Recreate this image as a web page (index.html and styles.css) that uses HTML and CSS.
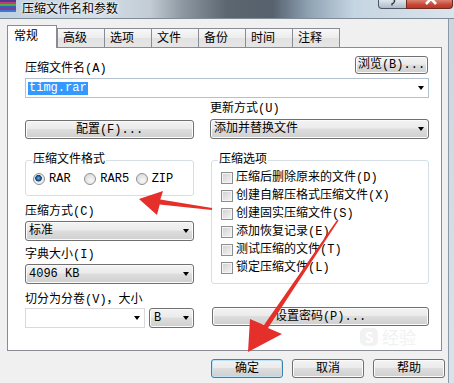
FILE: index.html
```html
<!DOCTYPE html>
<html lang="zh-CN">
<head>
  <meta charset="UTF-8" />
  <title>压缩文件名和参数</title>
  <link rel="stylesheet" href="styles.css">
</head>
<body>
  <div class="titlebar">
    <svg class="app-icon" width="17" height="12" viewBox="0 0 17 12">
      <rect x="0" y="0" width="16" height="2" fill="#4a3b8f"/>
      <rect x="0" y="2" width="16" height="2" fill="#c43a7c"/>
      <rect x="0" y="4" width="16" height="2" fill="#5aa83a"/>
      <rect x="0" y="6" width="16" height="2" fill="#2d62c0"/>
      <rect x="0" y="8" width="16" height="2" fill="#7b3f98"/>
      <rect x="0" y="10" width="16" height="2" fill="#3a7bd0"/>
    </svg>
    <span class="title">压缩文件名和参数</span>
    <div class="caption-btns">
      <span class="cap help">
        <svg width="28" height="9" viewBox="0 0 28 9"><path d="M11 -1 q5 -0.5 4.5 2.5 q-0.5 1.5 -2.5 2.5 v1.5" fill="none" stroke="#2f3b48" stroke-width="1.4"/></svg>
      </span>
      <span class="cap close">
        <svg width="46" height="9" viewBox="0 0 46 9"><path d="M16 -10 L29 4 M32 -10 L19 4" stroke="#fff" stroke-width="2.6"/></svg>
      </span>
    </div>
  </div>

  <div class="client">
    <div class="tabs">
      <div class="tab active">常规</div>
      <div class="tab">高级</div>
      <div class="tab">选项</div>
      <div class="tab">文件</div>
      <div class="tab">备份</div>
      <div class="tab">时间</div>
      <div class="tab">注释</div>
    </div>

    <div class="panel">
      <div class="name-row">
        <span class="label">压缩文件名(A)</span>
        <button class="btn browse">浏览(B)...</button>
      </div>
      <div class="combo edit"><span class="sel">timg.rar</span><i class="arrow"></i></div>

      <div class="cols">
        <div class="col">
          <button class="btn config">配置(F)...</button>
          <fieldset class="group format">
            <legend>压缩文件格式</legend>
            <div class="radios">
              <span class="radio-item"><i class="radio on"></i>RAR</span>
              <span class="radio-item"><i class="radio"></i>RAR5</span>
              <span class="radio-item"><i class="radio"></i>ZIP</span>
            </div>
          </fieldset>
          <div class="label method">压缩方式(C)</div>
          <div class="combo list"><span>标准</span><i class="arrow"></i></div>
          <div class="label dict">字典大小(I)</div>
          <div class="combo list"><span>4096 KB</span><i class="arrow"></i></div>
          <div class="label split">切分为分卷(V)，大小</div>
          <div class="split-row">
            <div class="combo edit light"><i class="arrow"></i></div>
            <div class="combo list unit"><span>B</span><i class="arrow"></i></div>
          </div>
        </div>

        <div class="col">
          <div class="label update">更新方式(U)</div>
          <div class="combo list update-combo"><span>添加并替换文件</span><i class="arrow"></i></div>
          <fieldset class="group options">
            <legend>压缩选项</legend>
            <div class="checks">
              <div class="check-row"><i class="check"></i>压缩后删除原来的文件(D)</div>
              <div class="check-row"><i class="check"></i>创建自解压格式压缩文件(X)</div>
              <div class="check-row"><i class="check"></i>创建固实压缩文件(S)</div>
              <div class="check-row"><i class="check"></i>添加恢复记录(E)</div>
              <div class="check-row"><i class="check"></i>测试压缩的文件(T)</div>
              <div class="check-row"><i class="check"></i>锁定压缩文件(L)</div>
            </div>
          </fieldset>
          <button class="btn password">设置密码(P)...</button>
        </div>
      </div>

      <div class="watermark"><span class="wm-logo">S</span>经验</div>
    </div>

    <div class="footer">
      <button class="btn default">确定</button>
      <button class="btn">取消</button>
      <button class="btn">帮助</button>
    </div>
  </div>

  <svg class="arrows" width="454" height="383" viewBox="0 0 454 383">
    <polygon fill="#e42f2b" points="139,199 163,191 160.3,199.5 212.1,208 211.9,210 159.7,204.5 157,215"/>
    <polygon fill="#e42f2b" points="248,352 250,319 264,325 337.4,219.6 338.6,220.4 268,328 282,334"/>
  </svg>
</body>
</html>
```

FILE: styles.css
```css
* {
  box-sizing: border-box;
}
body {
  margin: 0;
  width: 454px;
  height: 383px;
  overflow: hidden;
  position: relative;
  background: linear-gradient(#c9d5e0, #dbe3ea);
  font-family: "Liberation Mono", "Noto Sans CJK SC", monospace;
  font-size: 12px;
  line-height: 14px;
  color: #000;
}

/* title bar */
.titlebar {
  height: 19px;
  display: flex;
  align-items: flex-start;
  border-bottom: 1px solid #7f8c98;
  background: linear-gradient(90deg, #bfd0df 0%, #d3dee8 22%, #c3ccd4 33%, #8e99a3 40%, #5c6670 50%, #56616d 60%, #8fa2b3 68%, #c6d5e2 78%, #dae4ec 100%);
}
.app-icon {
  flex: none;
}
.title {
  margin: 1px 0 0 5px;
  font-family: "Noto Sans CJK SC", sans-serif;
  font-size: 12px;
  line-height: 13px;
  text-shadow: 0 0 4px #fff, 0 0 2px #fff;
}
.caption-btns {
  margin-left: auto;
  margin-right: 1px;
  display: flex;
}
.cap {
  display: block;
  height: 9px;
  border: 1px solid #4b5765;
  border-top: 0;
  overflow: hidden;
}
.cap svg {
  display: block;
}
.cap.help {
  width: 29px;
  border-radius: 0 0 0 4px;
  background: linear-gradient(#dfe6ed, #aebbc8);
}
.cap.close {
  width: 47px;
  margin-left: -1px;
  border-color: #6d2b22;
  border-radius: 0 0 4px 0;
  background: linear-gradient(#dc8272, #c64533 60%, #b5392a);
}

/* client area */
.client {
  height: 364px;
  margin-right: 5px;
  padding-top: 6px;
  background: #f0f0f0;
  border-right: 1px solid #8b99a7;
}
.tabs {
  display: flex;
  align-items: flex-end;
  height: 22px;
  margin-left: 7px;
}
.tab {
  width: 48px;
  height: 19px;
  margin-left: -1px;
  padding: 3px 0 0 5px;
  border: 1px solid #898c95;
  border-bottom: 0;
  background: linear-gradient(#f8f8f8, #ececec 50%, #e2e2e2 51%, #e6e6e6);
}
.tab.active {
  width: 50px;
  height: 23px;
  margin-left: 0;
  margin-bottom: -1px;
  padding: 4px 0 0 6px;
  background: #fff;
  position: relative;
  z-index: 1;
}
.tab.active + .tab {
  margin-left: 0;
}

.panel {
  position: relative;
  width: 435px;
  height: 304px;
  margin-left: 7px;
  padding: 8px 12px 0 17px;
  background: #fff;
  border: 1px solid #898c95;
}

/* buttons and combos */
.btn {
  display: block;
  padding: 0;
  font: inherit;
  color: #000;
  border: 1px solid #707070;
  border-radius: 3px;
  background: linear-gradient(#f3f3f3, #ebebeb 45%, #dddddd 50%, #cfcfcf);
  box-shadow: inset 0 0 0 1px #fbfbfb;
}
.btn.default {
  border-color: #3c7fb1;
  box-shadow: inset 0 0 0 1px #bfe3f6;
}
.name-row {
  display: flex;
  justify-content: space-between;
  height: 20px;
}
.name-row .label {
  align-self: flex-end;
}
.browse {
  width: 73px;
  height: 18px;
  margin-right: 1px;
}
.combo {
  display: flex;
  align-items: center;
  height: 20px;
  padding-left: 3px;
}
.combo .arrow {
  margin-left: auto;
  margin-right: 4px;
  width: 0;
  height: 0;
  border-left: 3.5px solid transparent;
  border-right: 3.5px solid transparent;
  border-top: 4px solid #000;
}
.combo.edit {
  margin-top: 2px;
  padding-left: 2px;
  background: #fff;
  border: 1px solid #b4c2d0;
}
.combo.edit.light {
  margin-top: 0;
  border-color: #d9d9d9;
  width: 120px;
}
.combo.list {
  border: 1px solid #707070;
  border-radius: 3px;
  background: linear-gradient(#f3f3f3, #ebebeb 45%, #dddddd 50%, #cfcfcf);
  box-shadow: inset 0 0 0 1px #fbfbfb;
}
.sel {
  background: #3399ff;
  color: #fff;
  padding: 0 1px;
  line-height: 13px;
}

.cols {
  display: grid;
  grid-template-columns: 169px 219px;
  column-gap: 16px;
  align-items: start;
}
.col {
  display: flex;
  flex-direction: column;
}
.config {
  margin-top: 22px;
  height: 19px;
}

/* group boxes */
.group {
  margin: 14px 0 0;
  min-width: 0;
  padding: 0 6px 9px;
  border: 1px solid #d5dfe5;
  border-radius: 3px;
}
.group legend {
  padding: 0 1px;
  line-height: 14px;
}
.radios {
  display: flex;
  height: 14px;
  margin: 5px 0 0 1px;
}
.radio-item {
  display: flex;
  align-items: center;
  gap: 4px;
  width: 54px;
}
.radio {
  width: 12px;
  height: 12px;
  border-radius: 50%;
  border: 1px solid #8e8f8f;
  background: radial-gradient(circle at 60% 65%, #f7f7f7, #d4d4d4);
}
.radio.on {
  background: radial-gradient(circle at 45% 42%, #8cc4ea 0, #2a6cb0 1.5px, #143f70 3px, #e9e9e9 3.6px, #f2f2f2 6px);
}
.options {
  margin-left: 1px;
  padding-bottom: 6px;
}
.checks {
  margin: 2px 0 0 3px;
}
.check-row {
  display: flex;
  align-items: center;
  gap: 3px;
  height: 18px;
}
.check {
  width: 12px;
  height: 12px;
  border: 1px solid #8e8f8f;
  background: linear-gradient(135deg, #cfcfcf, #f6f6f6);
  box-shadow: inset 0 0 0 1px #f4f4f4;
}

/* labels */
.label.method {
  margin-top: 9px;
}
.method + .combo {
  margin-top: 2px;
}
.label.dict {
  margin-top: 7px;
}
.dict + .combo {
  margin-top: 2px;
}
.label.split {
  margin-top: 9px;
}
.split-row {
  display: flex;
  justify-content: space-between;
  margin-top: 1px;
}
.unit {
  width: 45px;
}
.unit span {
  padding-left: 1px;
}
.label.update {
  margin-top: 4px;
}
.update-combo {
  margin-top: 3px;
}
.password {
  margin: 23px 0 0 2px;
  height: 19px;
}

.watermark {
  position: absolute;
  left: 352px;
  top: 280px;
  display: flex;
  align-items: center;
  gap: 4px;
  font-family: "Noto Sans CJK SC", sans-serif;
  font-size: 17px;
  color: #f1f1f1;
}
.wm-logo {
  width: 18px;
  height: 18px;
  line-height: 18px;
  text-align: center;
  border-radius: 5px;
  background: #f2f2f2;
  color: #fff;
  font-weight: bold;
  font-size: 14px;
}

.footer {
  display: flex;
  justify-content: flex-end;
  gap: 9px;
  padding: 8px 3px 0 0;
}
.footer .btn {
  width: 72px;
  height: 19px;
}

.arrows {
  position: absolute;
  left: 0;
  top: 0;
  pointer-events: none;
}
```
